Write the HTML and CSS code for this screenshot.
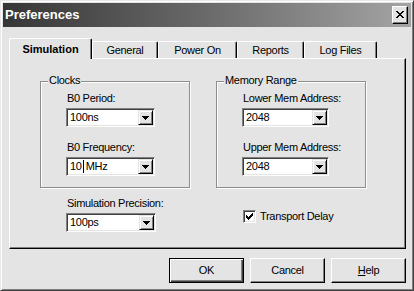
FILE: index.html
```html
<!DOCTYPE html>
<html>
<head>
<meta charset="utf-8">
<title>Preferences</title>
<link rel="stylesheet" href="styles.css">
</head>
<body>
<div class="window">
  <div class="titlebar">
    <span class="title">Preferences</span>
    <div class="close">
      <svg width="8" height="7" viewBox="0 0 8 7" shape-rendering="crispEdges"><path d="M0 0h2v1h-2z M6 0h2v1h-2z M1 1h2v1h-2z M5 1h2v1h-2z M2 2h4v1h-4z M3 3h2v1h-2z M2 4h4v1h-4z M1 5h2v1h-2z M5 5h2v1h-2z M0 6h2v1h-2z M6 6h2v1h-2z" fill="#000"/></svg>
    </div>
  </div>
  <div class="body">
    <div class="tabs">
      <div class="tab active">Simulation</div>
      <div class="tab w-general">General</div>
      <div class="tab w-power">Power On</div>
      <div class="tab w-reports">Reports</div>
      <div class="tab w-log">Log Files</div>
    </div>
    <div class="panel">
      <div class="groups">
        <div class="group">
          <span class="group-title">Clocks</span>
          <div class="field">
            <div class="label">B0 Period:</div>
            <div class="combo w89"><span class="value">100ns</span><span class="drop"><svg width="7" height="4" viewBox="0 0 7 4" shape-rendering="crispEdges"><path d="M0 0h7v1h-7z M1 1h5v1h-5z M2 2h3v1h-3z M3 3h1v1h-1z" fill="#000"/></svg></span></div>
          </div>
          <div class="field">
            <div class="label">B0 Frequency:</div>
            <div class="combo w89"><span class="value">10<span class="caret"></span>MHz</span><span class="drop"><svg width="7" height="4" viewBox="0 0 7 4" shape-rendering="crispEdges"><path d="M0 0h7v1h-7z M1 1h5v1h-5z M2 2h3v1h-3z M3 3h1v1h-1z" fill="#000"/></svg></span></div>
          </div>
        </div>
        <div class="group">
          <span class="group-title">Memory Range</span>
          <div class="field">
            <div class="label">Lower Mem Address:</div>
            <div class="combo w87"><span class="value">2048</span><span class="drop"><svg width="7" height="4" viewBox="0 0 7 4" shape-rendering="crispEdges"><path d="M0 0h7v1h-7z M1 1h5v1h-5z M2 2h3v1h-3z M3 3h1v1h-1z" fill="#000"/></svg></span></div>
          </div>
          <div class="field">
            <div class="label">Upper Mem Address:</div>
            <div class="combo w87"><span class="value">2048</span><span class="drop"><svg width="7" height="4" viewBox="0 0 7 4" shape-rendering="crispEdges"><path d="M0 0h7v1h-7z M1 1h5v1h-5z M2 2h3v1h-3z M3 3h1v1h-1z" fill="#000"/></svg></span></div>
          </div>
        </div>
      </div>
      <div class="lower">
        <div class="col-left">
          <div class="label">Simulation Precision:</div>
          <div class="combo w90"><span class="value">100ps</span><span class="drop"><svg width="7" height="4" viewBox="0 0 7 4" shape-rendering="crispEdges"><path d="M0 0h7v1h-7z M1 1h5v1h-5z M2 2h3v1h-3z M3 3h1v1h-1z" fill="#000"/></svg></span></div>
        </div>
        <div class="col-right">
          <div class="check">
            <span class="box"><svg width="7" height="7" viewBox="0 0 7 7" shape-rendering="crispEdges"><path d="M6 0h1v1h-1z M5 1h2v1h-2z M0 2h1v1h-1z M4 2h3v1h-3z M0 3h2v1h-2z M3 3h3v1h-3z M0 4h5v1h-5z M1 5h3v1h-3z M2 6h1v1h-1z" fill="#000"/></svg></span>
            <span class="check-label">Transport Delay</span>
          </div>
        </div>
      </div>
    </div>
    <div class="buttons">
      <div class="btn default">OK</div>
      <div class="btn">Cancel</div>
      <div class="btn"><u>H</u>elp</div>
    </div>
  </div>
</div>
</body>
</html>
```

FILE: styles.css
```css
html, body {
  margin: 0;
  padding: 0;
  background: #e4e4e4;
}

body {
  font-family: "Liberation Sans", Arial, sans-serif;
  font-size: 11px;
  letter-spacing: -0.3px;
  line-height: 13px;
  color: #000;
}

.window {
  width: 414px;
  height: 291px;
  box-sizing: border-box;
  border: 1px solid;
  border-color: #e8e8e8 #404040 #404040 #e8e8e8;
  box-shadow: inset 1px 1px 0 #fff, inset -1px -1px 0 #808080;
  padding: 2px;
  background: #e4e4e4;
  display: flex;
  flex-direction: column;
}

.titlebar {
  height: 24px;
  display: flex;
  align-items: center;
  justify-content: space-between;
  background: linear-gradient(to right, #363636 0%, #6a6a6a 50%, #a4a4a4 100%);
  padding: 0 2px;
}

.title {
  font-weight: bold;
  font-size: 13px;
  letter-spacing: 0;
  color: #fff;
  line-height: 24px;
}

.close {
  width: 16px;
  height: 18px;
  box-sizing: border-box;
  background: #e4e4e4;
  border: 1px solid;
  border-color: #fff #000 #000 #fff;
  box-shadow: inset -1px -1px 0 #808080;
  display: flex;
  align-items: center;
  justify-content: center;
  margin-right: 1px;
}

.close svg {
  display: block;
  margin-bottom: 1px;
}

.body {
  flex: 1;
  display: flex;
  flex-direction: column;
  padding: 11px 5px 0 6px;
}

.tabs {
  display: flex;
  align-items: flex-end;
  height: 20px;
  position: relative;
  z-index: 1;
}

.tab {
  box-sizing: border-box;
  height: 17px;
  border-top: 1px solid #fff;
  border-left: 1px solid #fff;
  border-right: 1px solid #000;
  box-shadow: inset -1px 0 0 #808080;
  border-radius: 2px 2px 0 0;
  text-align: center;
  padding-top: 2px;
  background: #e4e4e4;
}

.tab.active {
  width: 83px;
  height: 21px;
  margin-bottom: -1px;
  font-weight: bold;
  letter-spacing: 0;
  padding-top: 4px;
}

.w-general { width: 66px; }
.w-power { width: 79px; }
.w-reports { width: 67px; }
.w-log { width: 73px; }

.panel {
  height: 191px;
  box-sizing: border-box;
  border-top: 1px solid #fff;
  border-left: 1px solid #fff;
  border-right: 1px solid #000;
  border-bottom: 1px solid #000;
  box-shadow: inset -1px -1px 0 #808080;
  padding: 22px 0 0 30px;
}

.groups {
  display: flex;
  gap: 26px;
}

.group {
  position: relative;
  width: 150px;
  box-sizing: border-box;
  padding: 10px 0 11px 25px;
  border: 1px solid #8c8c8c;
  box-shadow: 1px 1px 0 #fff, inset 1px 1px 0 #fff;
}

.group-title {
  position: absolute;
  top: -8px;
  left: 7px;
  padding: 0 1px;
  background: #e4e4e4;
}

.label {
  padding-left: 1px;
}

.field .label {
  margin-bottom: 3px;
}

.field + .field {
  margin-top: 14px;
}

.combo {
  box-sizing: border-box;
  height: 19px;
  display: flex;
  align-items: flex-start;
  border: 1px solid;
  border-color: #808080 #fff #fff #808080;
  box-shadow: inset 1px 1px 0 #404040, inset -1px -1px 0 #e4e4e4;
  background: #fff;
  padding: 1px;
}

.w89 { width: 89px; }
.w87 { width: 87px; }
.w90 { width: 90px; }

.combo .value {
  flex: 1;
  padding: 0 0 0 2px;
  line-height: 14px;
  display: flex;
  align-items: center;
}

.caret {
  display: inline-block;
  width: 1px;
  height: 13px;
  background: #000;
  margin: 0 2px 0 1px;
}

.combo .drop {
  width: 15px;
  height: 15px;
  box-sizing: border-box;
  background: #e4e4e4;
  border: 1px solid;
  border-color: #e4e4e4 #000 #000 #e4e4e4;
  box-shadow: inset 1px 1px 0 #fff, inset -1px -1px 0 #808080;
  display: flex;
  align-items: center;
  justify-content: center;
}

.combo .drop svg {
  display: block;
}

.lower {
  display: flex;
  gap: 26px;
  margin-top: 9px;
}

.col-left {
  width: 150px;
  box-sizing: border-box;
  padding-left: 26px;
}

.col-left .label {
  margin-bottom: 3px;
}

.col-right {
  width: 150px;
  box-sizing: border-box;
  padding-left: 27px;
}

.check {
  display: flex;
  align-items: center;
  margin-top: 13px;
}

.check .box {
  width: 13px;
  height: 13px;
  box-sizing: border-box;
  background: #fff;
  border: 1px solid;
  border-color: #808080 #fff #fff #808080;
  box-shadow: inset 1px 1px 0 #404040, inset -1px -1px 0 #e4e4e4;
  display: flex;
  align-items: center;
  justify-content: center;
}

.check .box svg {
  display: block;
}

.check-label {
  margin-left: 4px;
}

.buttons {
  display: flex;
  justify-content: flex-end;
  gap: 6px;
  margin-top: 9px;
}

.btn {
  width: 75px;
  height: 25px;
  box-sizing: border-box;
  border: 1px solid;
  border-color: #fff #000 #000 #fff;
  box-shadow: inset -1px -1px 0 #808080;
  background: #e4e4e4;
  display: flex;
  align-items: center;
  justify-content: center;
}

.btn.default {
  border: 1px solid #000;
  box-shadow: inset 1px 1px 0 #fff, inset -1px -1px 0 #404040, inset -2px -2px 0 #808080;
}
```
